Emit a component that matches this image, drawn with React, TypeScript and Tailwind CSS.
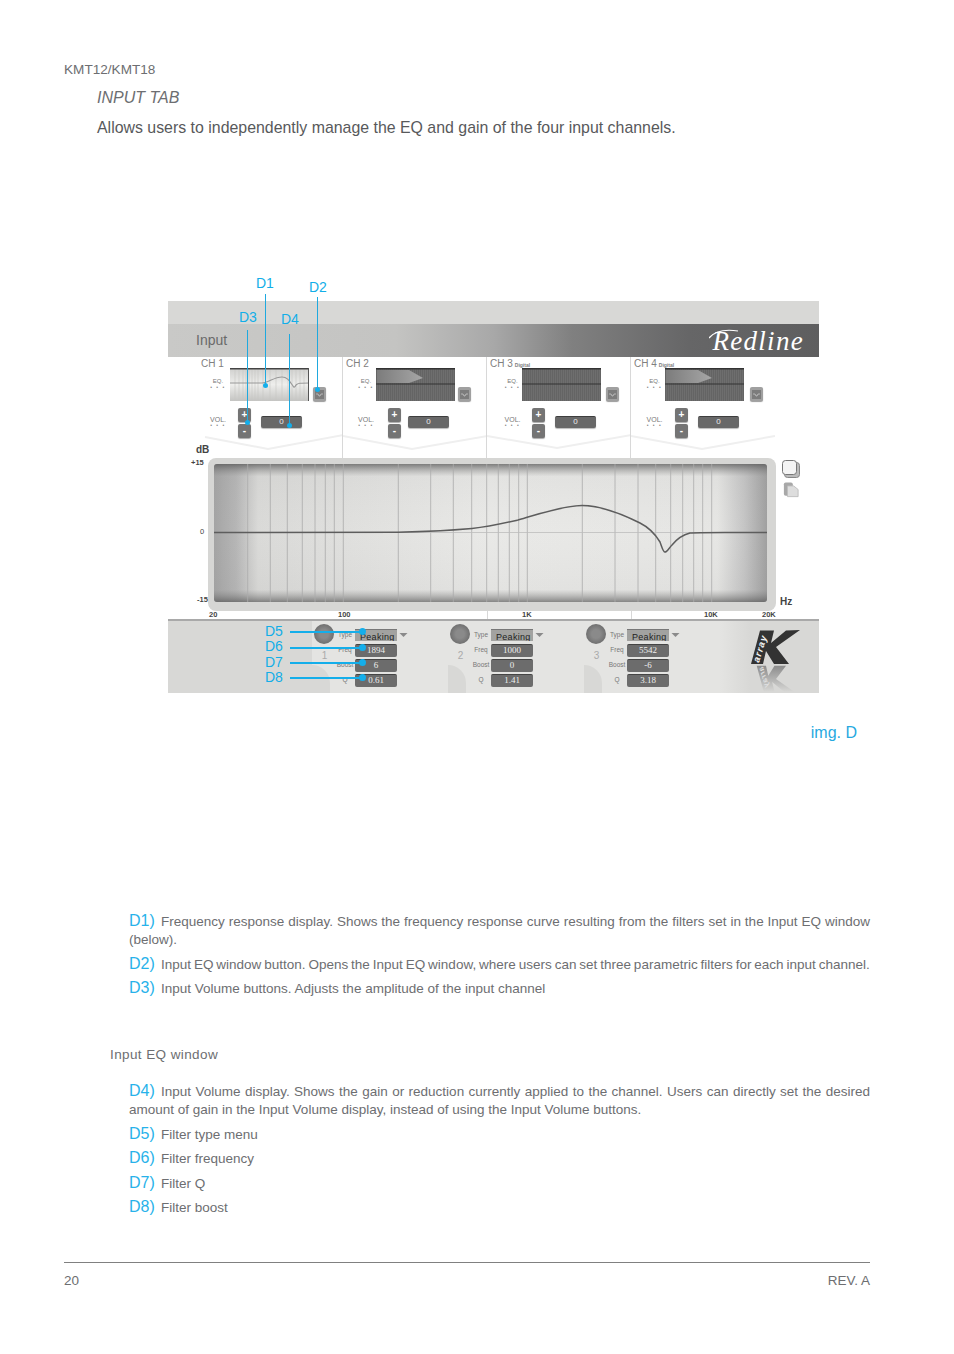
import React from "react";

const xs = [247.7, 270.3, 287.3, 302.3, 315, 325.3, 334.3, 343.3, 398.3, 430.7, 453.3, 471.7, 486.7, 498.3, 509.3, 518.7, 527.3, 582.3, 615, 638, 655.7, 670.7, 682.7, 693.7, 702.7, 711.7];
const curve = "M214 532.6 L398 532.2 C420 532 445 531 472 528.5 C490 526.5 505 523 518 520 C535 515.5 560 506 582 505.6 C600 505.6 622 514 640 523 C652 529 657 537 660 542 C662 547 663 552 665 552 C667 552 669 548 672 545 C676 540 682 535 690 533 C696 532.2 710 532.4 767 532.6";

function Dots() {
  return <div className="text-[5px] leading-[5px] text-[#888] tracking-[1.5px] text-center">• • •</div>;
}

function MiniDisplay({ kind }: { kind: "curve" | "dark" | "wedge" }) {
  if (kind === "curve") {
    return (
      <svg viewBox="0 0 79 33" className="w-[79px] h-[33px] block">
        <defs>
          <linearGradient id="miniL" x1="0" x2="0" y1="0" y2="1">
            <stop offset="0" stopColor="#d0d0ce" />
            <stop offset="0.5" stopColor="#eeeeec" />
            <stop offset="1" stopColor="#c4c4c2" />
          </linearGradient>
        </defs>
        <rect width="79" height="33" fill="url(#miniL)" />
        {[5, 9, 13, 16, 19, 22, 25, 28, 33, 40, 46, 52, 58, 62, 66, 70, 74].map((x) => (
          <line key={x} x1={x} x2={x} y1="1" y2="33" stroke="#c6c6c4" strokeWidth="0.6" />
        ))}
        <path d="M0 15 L32 15 C38 15 44 9 52 9 C58 9 60 14 63 18 C64 20 65 19 66 17 C68 15 70 15 79 15" fill="none" stroke="#999999" strokeWidth="1.2" />
        <rect width="79" height="1.5" fill="#444" />
        <rect x="78" width="1" height="33" fill="#555" />
      </svg>
    );
  }
  return (
    <svg viewBox="0 0 79 33" className="w-[79px] h-[33px] block">
      <defs>
        <pattern id={`st${kind}`} width="2" height="33" patternUnits="userSpaceOnUse">
          <rect width="2" height="33" fill="#6e6e6e" />
          <rect width="1" height="33" fill="#646464" />
        </pattern>
        <linearGradient id={`wg${kind}`} x1="0" x2="1" y1="0" y2="0">
          <stop offset="0" stopColor="#7c7c7c" />
          <stop offset="1" stopColor="#a6a6a6" />
        </linearGradient>
      </defs>
      <rect width="79" height="33" fill={`url(#st${kind})`} />
      {kind === "wedge" && <polygon points="1,2 33,2 47,10 33,15 1,15" fill={`url(#wg${kind})`} />}
      <rect x="0" y="15.5" width="79" height="1" fill="#333" />
      <rect width="79" height="1.5" fill="#333" />
    </svg>
  );
}

function EqButton() {
  return (
    <div className="w-[13px] h-[14px] rounded-[2px] bg-[#a0a0a0] shadow-[0_1px_1px_#999] flex items-center justify-center">
      <svg viewBox="0 0 9 9" className="w-[9px] h-[9px]">
        <rect width="9" height="9" fill="#7c7c7c" />
        <path d="M1 4 L3 4 L4 6 L5 6 L6 4 L8 4" fill="none" stroke="#cfcfcf" strokeWidth="0.7" />
      </svg>
    </div>
  );
}

function RoundBtn({ t }: { t: string }) {
  return (
    <div className="w-[13px] h-[14px] rounded-[2px] bg-[#747474] shadow-[0_1px_1px_#aaa] text-white font-bold text-[10px] leading-[13px] text-center">{t}</div>
  );
}

type Ch = {
  name: string;
  digital?: boolean;
  col: string;
  lab: string;
  row: string;
  tag: string;
  btnGap: string;
  volGap: string;
  valGap: string;
  kind: "curve" | "dark" | "wedge";
  points: string;
};

const channels: Ch[] = [
  { name: "CH 1", col: "w-[175px] border-r border-[#d8d8d8]", lab: "pl-[33px]", row: "ml-[38px]", tag: "pl-0", btnGap: "ml-[4px]", volGap: "ml-[8px]", valGap: "ml-[10px]", kind: "curve", points: "37,80 100,92 175,78" },
  { name: "CH 2", col: "w-[144px] border-r border-[#d8d8d8]", lab: "pl-[3px]", row: "ml-[9px]", tag: "pl-[4px]", btnGap: "ml-[3px]", volGap: "ml-[12px]", valGap: "ml-[7px]", kind: "wedge", points: "0,79 69,92 144,79" },
  { name: "CH 3", digital: true, col: "w-[144px] border-r border-[#d8d8d8]", lab: "pl-[3px]", row: "ml-[11px]", tag: "pl-[5px]", btnGap: "ml-[5px]", volGap: "ml-[10px]", valGap: "ml-[10px]", kind: "dark", points: "0,79 70,91 144,78" },
  { name: "CH 4", digital: true, col: "w-[144px]", lab: "pl-[3px]", row: "ml-[10px]", tag: "pl-[3px]", btnGap: "ml-[6px]", volGap: "ml-[10px]", valGap: "ml-[10px]", kind: "wedge", points: "0,79 71,92 144,79" },
];

function Channel({ c }: { c: Ch }) {
  return (
    <div className={`relative h-[101px] ${c.col}`}>
      <svg className="absolute inset-0 w-full h-full" aria-hidden="true">
        <polyline points={c.points} fill="none" stroke="#efefef" strokeWidth="2" />
      </svg>
      <div className={`relative h-[12px] text-[10px] leading-[14px] text-[#808080] ${c.lab}`}>
        {c.name}
        {c.digital && <span className="text-[5px] font-bold ml-[2px]">Digital</span>}
      </div>
      <div className={`relative flex items-start -mt-[1px] ${c.row}`}>
        <div className={`w-[24px] pt-[10px] ${c.tag}`}>
          <div className="text-[6px] leading-[7px] text-[#777] text-center">EQ.</div>
          <Dots />
        </div>
        <MiniDisplay kind={c.kind} />
        <div className={`mt-[19px] ${c.btnGap}`}><EqButton /></div>
      </div>
      <div className={`relative flex items-start mt-[7px] ${c.row}`}>
        <div className={`w-[24px] pt-[8px] ${c.tag}`}>
          <div className="text-[7px] leading-[7px] text-[#777] text-center">VOL.</div>
          <Dots />
        </div>
        <div className={`flex flex-col gap-[2px] ${c.volGap}`}>
          <RoundBtn t="+" />
          <RoundBtn t="-" />
        </div>
        <div className={`mt-[8px] w-[41px] h-[12px] rounded-[2px] bg-[#686868] border-t border-[#3e3e3e] text-[8px] leading-[9px] text-[#eee] text-center shadow-[0_1px_1px_#bbb] ${c.valGap}`}>0</div>
      </div>
    </div>
  );
}

function Graph() {
  return (
    <svg viewBox="214 464 553 138" className="w-[553px] h-[138px] block rounded-[3px]">
      <defs>
        <linearGradient id="gH" x1="0" x2="1" y1="0" y2="0">
          <stop offset="0" stopColor="#a4a4a4" />
          <stop offset="0.04" stopColor="#b6b6b6" />
          <stop offset="0.08" stopColor="#dadad8" />
          <stop offset="0.5" stopColor="#e9e9e7" />
          <stop offset="0.91" stopColor="#e6e6e4" />
          <stop offset="0.96" stopColor="#c4c4c4" />
          <stop offset="1" stopColor="#a0a0a0" />
        </linearGradient>
        <linearGradient id="gV" x1="0" x2="0" y1="0" y2="1">
          <stop offset="0" stopColor="#505050" stopOpacity="0.7" />
          <stop offset="0.09" stopColor="#808080" stopOpacity="0.06" />
          <stop offset="0.5" stopColor="#aaaaaa" stopOpacity="0" />
          <stop offset="0.91" stopColor="#808080" stopOpacity="0.06" />
          <stop offset="1" stopColor="#505050" stopOpacity="0.65" />
        </linearGradient>
      </defs>
      <rect x="214" y="464" width="553" height="138" fill="url(#gH)" />
      <rect x="214" y="464" width="553" height="138" fill="url(#gV)" />
      {xs.map((x) => (
        <line key={x} x1={x} x2={x} y1="464" y2="602" stroke="#ababab" strokeWidth="0.8" />
      ))}
      <line x1="214" x2="767" y1="532.5" y2="532.5" stroke="#bcbcbc" strokeWidth="0.8" />
      <path d={curve} fill="none" stroke="#5d5d5d" strokeWidth="1.5" />
    </svg>
  );
}

function Field({ label, value }: { label: string; value: string }) {
  return (
    <div className="flex items-start h-[15px]">
      <div className="w-[19px] shrink-0 pr-[1px] text-[6.5px] leading-[12px] text-[#777] text-center whitespace-nowrap">{label}</div>
      <div className="w-[42px] h-[13px] rounded-[2px] bg-[#6c6c6c] border-t border-[#444] text-[9px] leading-[11px] text-[#eee] text-center font-['Liberation_Serif',serif]">{value}</div>
    </div>
  );
}

function EqBlock({ n, vals }: { n: string; vals: string[] }) {
  return (
    <div className="relative w-[136px] h-[72px] bg-[#e4e4e2] overflow-hidden flex pl-[2px] pt-[3px]">
      <div className="absolute left-0 bottom-0 w-[18px] h-[28px] rounded-tr-[18px] bg-[#d8d8d6]" />
      <div className="relative w-[22px] shrink-0">
        <div className="w-[20px] h-[20px] rounded-full bg-[radial-gradient(circle,#8a8a8a_30%,#707070_70%,#b5b5b5_100%)]" />
        <div className="text-[10px] leading-[12px] mt-[6px] text-[#aaa] text-center pr-[1px]">{n}</div>
      </div>
      <div className="relative pt-[5px]">
        <div className="flex items-start h-[15px]">
          <div className="w-[19px] shrink-0 pr-[1px] text-[6.5px] leading-[12px] text-[#777] text-center">Type</div>
          <div className="w-[42px] h-[12px] overflow-hidden bg-[#a2a2a0] border-t border-[#777] text-[9px] leading-[14px] text-[#222] pl-[5px] tracking-[0.3px]">Peaking</div>
          <svg viewBox="0 0 8 4" className="w-[9px] h-[4px] ml-[2px] mt-[4px]"><polygon points="0,0 8,0 4,4" fill="#8a8a8a" /></svg>
        </div>
        <Field label="Freq" value={vals[0]} />
        <Field label="Boost" value={vals[1]} />
        <Field label="Q" value={vals[2]} />
      </div>
    </div>
  );
}

function KLogo({ id, flip }: { id: string; flip?: boolean }) {
  return (
    <svg viewBox="0 0 50 35" className={flip ? "w-[50px] h-[27px] block -scale-y-100" : "w-[50px] h-[35px] block"}>
      {flip && (
        <defs>
          <linearGradient id={id} x1="0" x2="0" y1="0" y2="1">
            <stop offset="0" stopColor="#d8d8d6" />
            <stop offset="1" stopColor="#8c8c8c" />
          </linearGradient>
        </defs>
      )}
      <path d="M9 0.5 L23 0.5 L20 13 L35 0.5 L49 0 L25 17 L38 34 L23 34 L15 21 L12 34 L0 34 Z" fill={flip ? `url(#${id})` : "#333333"} />
      <text transform="translate(8 33) rotate(-73)" fontSize="9.5" fontWeight="700" fontStyle="italic" letterSpacing="1" fill={flip ? "#e0e0e0" : "#f4f4f4"} fontFamily="'Liberation Sans',sans-serif">array</text>
    </svg>
  );
}

function Vline({ cls }: { cls: string }) {
  return <div className={`absolute w-[1px] bg-[#1fa9df] ${cls}`} />;
}
function Dot({ cls }: { cls: string }) {
  return <div className={`absolute rounded-full bg-[#14aeea] ${cls}`} />;
}
function Tag({ t, cls }: { t: string; cls: string }) {
  return <div className={`absolute text-[14px] leading-[16px] text-[#12aee8] ${cls}`}>{t}</div>;
}
function Hline({ t, top, tcls }: { t: string; top: string; tcls: string }) {
  return (
    <>
      <Tag t={t} cls={tcls} />
      <div className={`absolute left-[122px] w-[72px] h-[1.5px] bg-[#14aeea] ${top}`} />
    </>
  );
}

function Item({ d, children, cls }: { d: string; children: React.ReactNode; cls?: string }) {
  return (
    <p className={`text-[13.5px] leading-[18px] text-[#6d6e71] ${cls ?? ""}`}>
      <span className="inline-block w-[32px] text-[16px] leading-[14px] text-[#27b2ea]">{d}</span>
      {children}
    </p>
  );
}

export default function App() {
  return (
    <div className="w-[954px] h-[1354px] bg-white overflow-hidden font-['Liberation_Sans',Arial,sans-serif] text-[#6d6e71] pt-[61px]">
      <div className="pl-[64px] text-[13.6px] leading-[17px]">KMT12/KMT18</div>
      <div className="pl-[97px] mt-[10px] text-[16px] leading-[20px] italic">INPUT TAB</div>
      <div className="pl-[97px] mt-[10px] text-[15.9px] leading-[20px] text-[#58595b]">Allows users to independently manage the EQ and gain of the four input channels.</div>

      <div className="relative ml-[168px] w-[651px] mt-[132px] pt-[31px]">
        <div className="h-[23px] bg-[#d8d8d6]" />
        <div className="h-[33px] bg-[linear-gradient(90deg,#c9c9c7_0%,#c4c4c2_35%,#a8a8a8_50%,#808080_62%,#666667_80%,#5e5e5f_100%)] flex items-center justify-between pl-[28px] pr-[15px]">
          <span className="text-[14px] text-[#6a6a6a]">Input</span>
          <span className="relative text-[27px] leading-[30px] italic text-white font-['Liberation_Serif',serif] tracking-[1.3px] flex items-center">
            Redline
            <svg viewBox="0 0 30 14" className="absolute -left-[3px] top-[3px] w-[30px] h-[14px]" aria-hidden="true">
              <path d="M0 9 C6 2 16 0 29 2" fill="none" stroke="#fff" strokeWidth="1.2" />
            </svg>
          </span>
        </div>

        <div className="flex bg-white">
          {channels.map((c) => <Channel key={c.name} c={c} />)}
        </div>

        <div className="relative flex h-[153px] bg-white">
          <div className="relative w-[40px] shrink-0 -mt-[14px] pl-[23px] font-bold text-[#444]">
            <div className="text-[10px] leading-[12px] pl-[5px]">dB</div>
            <div className="text-[7.5px] leading-[9px] mt-[2px]">+15</div>
            <div className="text-[7.5px] leading-[9px] mt-[60px] pl-[9px] font-normal">0</div>
            <div className="text-[7.5px] leading-[9px] mt-[59px] pl-[6px]">-15</div>
          </div>
          <div className="w-[568px] h-[153px] rounded-[8px] bg-[#d6d6d4] pl-[6px] pr-[9px] pt-[6px]">
            <Graph />
          </div>
          <div className="pl-[6px] pt-[2px] flex flex-col">
            <svg viewBox="0 0 18 18" className="w-[18px] h-[18px]">
              <rect x="2.5" y="2.5" width="15" height="15" rx="3" fill="#bbb" stroke="#888" />
              <rect x="0.5" y="0.5" width="14" height="14" rx="3" fill="#f4f4f4" stroke="#777" />
            </svg>
            <svg viewBox="0 0 18 18" className="w-[16px] h-[17px] mt-[3px] ml-[1px]">
              <rect x="1" y="1" width="10" height="15" rx="2" fill="#a8a8a8" />
              <path d="M5 5 L12 5 L17 9 L17 17 L5 17 Z" fill="#ddd" stroke="#bbb" />
            </svg>
            <div className="mt-[98px] -ml-[2px] font-bold text-[10px] leading-[12px] text-[#444]">Hz</div>
          </div>
        </div>

        <div className="relative flex h-[8px] bg-white text-[7.5px] leading-[7px] font-bold text-[#444] pl-[41px]">
          <div className="w-[129px]">20</div>
          <div className="w-[184px]">100</div>
          <div className="w-[182px]">1K</div>
          <div className="w-[58px]">10K</div>
          <div>20K</div>
          <div className="absolute left-[319px] top-0 w-[1px] h-[8px] bg-[#d8d8d8]" />
          <div className="absolute left-[463px] top-0 w-[1px] h-[8px] bg-[#d8d8d8]" />
        </div>

        <div className="h-[74px] bg-[#d8d8d6] border-t-2 border-[#a9a9a9] flex pl-[144px] overflow-hidden">
          <EqBlock n="1" vals={["1894", "6", "0.61"]} />
          <EqBlock n="2" vals={["1000", "0", "1.41"]} />
          <EqBlock n="3" vals={["5542", "-6", "3.18"]} />
          <div className="flex-1 pl-[31px] pt-[9px] bg-[linear-gradient(90deg,#e4e4e2,#d8d8d6_30px)]">
            <KLogo id="k1" />
            <KLogo id="k2" flip />
          </div>
        </div>

        {/* callouts over the picture */}
        <Tag t="D1" cls="left-[88px] top-[5px]" />
        <Tag t="D2" cls="left-[141px] top-[9px]" />
        <Tag t="D3" cls="left-[71px] top-[39px]" />
        <Tag t="D4" cls="left-[113px] top-[41px]" />
        <Vline cls="left-[97px] top-[24px] h-[91px]" />
        <Vline cls="left-[149px] top-[27px] h-[92px]" />
        <Vline cls="left-[79px] top-[60px] h-[92px]" />
        <Vline cls="left-[121px] top-[64px] h-[91px]" />
        <Dot cls="left-[95px] top-[113px] w-[5px] h-[5px]" />
        <Dot cls="left-[147px] top-[117px] w-[5px] h-[5px]" />
        <Dot cls="left-[77px] top-[150px] w-[5px] h-[5px]" />
        <Dot cls="left-[119px] top-[153px] w-[5px] h-[5px]" />
        <Hline t="D5" top="top-[361px]" tcls="left-[97px] top-[353px]" />
        <Hline t="D6" top="top-[377px]" tcls="left-[97px] top-[368px]" />
        <Hline t="D7" top="top-[392px]" tcls="left-[97px] top-[384px]" />
        <Hline t="D8" top="top-[407px]" tcls="left-[97px] top-[399px]" />
        <Dot cls="left-[191px] top-[358px] w-[7px] h-[7px]" />
        <Dot cls="left-[191px] top-[374px] w-[7px] h-[7px]" />
        <Dot cls="left-[191px] top-[389px] w-[7px] h-[7px]" />
        <Dot cls="left-[191px] top-[404px] w-[7px] h-[7px]" />
      </div>

      <div className="mt-[30px] pr-[97px] text-right text-[16px] leading-[20px] text-[#27a9df]">img. D</div>

      <div className="ml-[129px] w-[741px] mt-[170px]">
        <Item d="D1)" cls="text-justify">Frequency response display. Shows the frequency response curve resulting from the filters set in the Input EQ window (below).</Item>
        <Item d="D2)" cls="mt-[7px] whitespace-nowrap [word-spacing:-0.85px]">Input EQ window button. Opens the Input EQ window, where users can set three parametric filters for each input channel.</Item>
        <Item d="D3)" cls="mt-[6px]">Input Volume buttons. Adjusts the amplitude of the input channel</Item>
      </div>

      <div className="ml-[110px] mt-[48px] text-[13.5px] leading-[18px] tracking-[0.4px]">Input EQ window</div>

      <div className="ml-[129px] w-[741px] mt-[19px]">
        <Item d="D4)" cls="text-justify">Input Volume display. Shows the gain or reduction currently applied to the channel. Users can directly set the desired amount of gain in the Input Volume display, instead of using the Input Volume buttons.</Item>
        <Item d="D5)" cls="mt-[7px]">Filter type menu</Item>
        <Item d="D6)" cls="mt-[6px]">Filter frequency</Item>
        <Item d="D7)" cls="mt-[7px]">Filter Q</Item>
        <Item d="D8)" cls="mt-[6px]">Filter boost</Item>
      </div>

      <div className="ml-[64px] w-[806px] mt-[45px] border-t border-[#808080] pt-[9px] flex justify-between text-[13.5px] leading-[17px]">
        <span>20</span>
        <span>REV. A</span>
      </div>
    </div>
  );
}
